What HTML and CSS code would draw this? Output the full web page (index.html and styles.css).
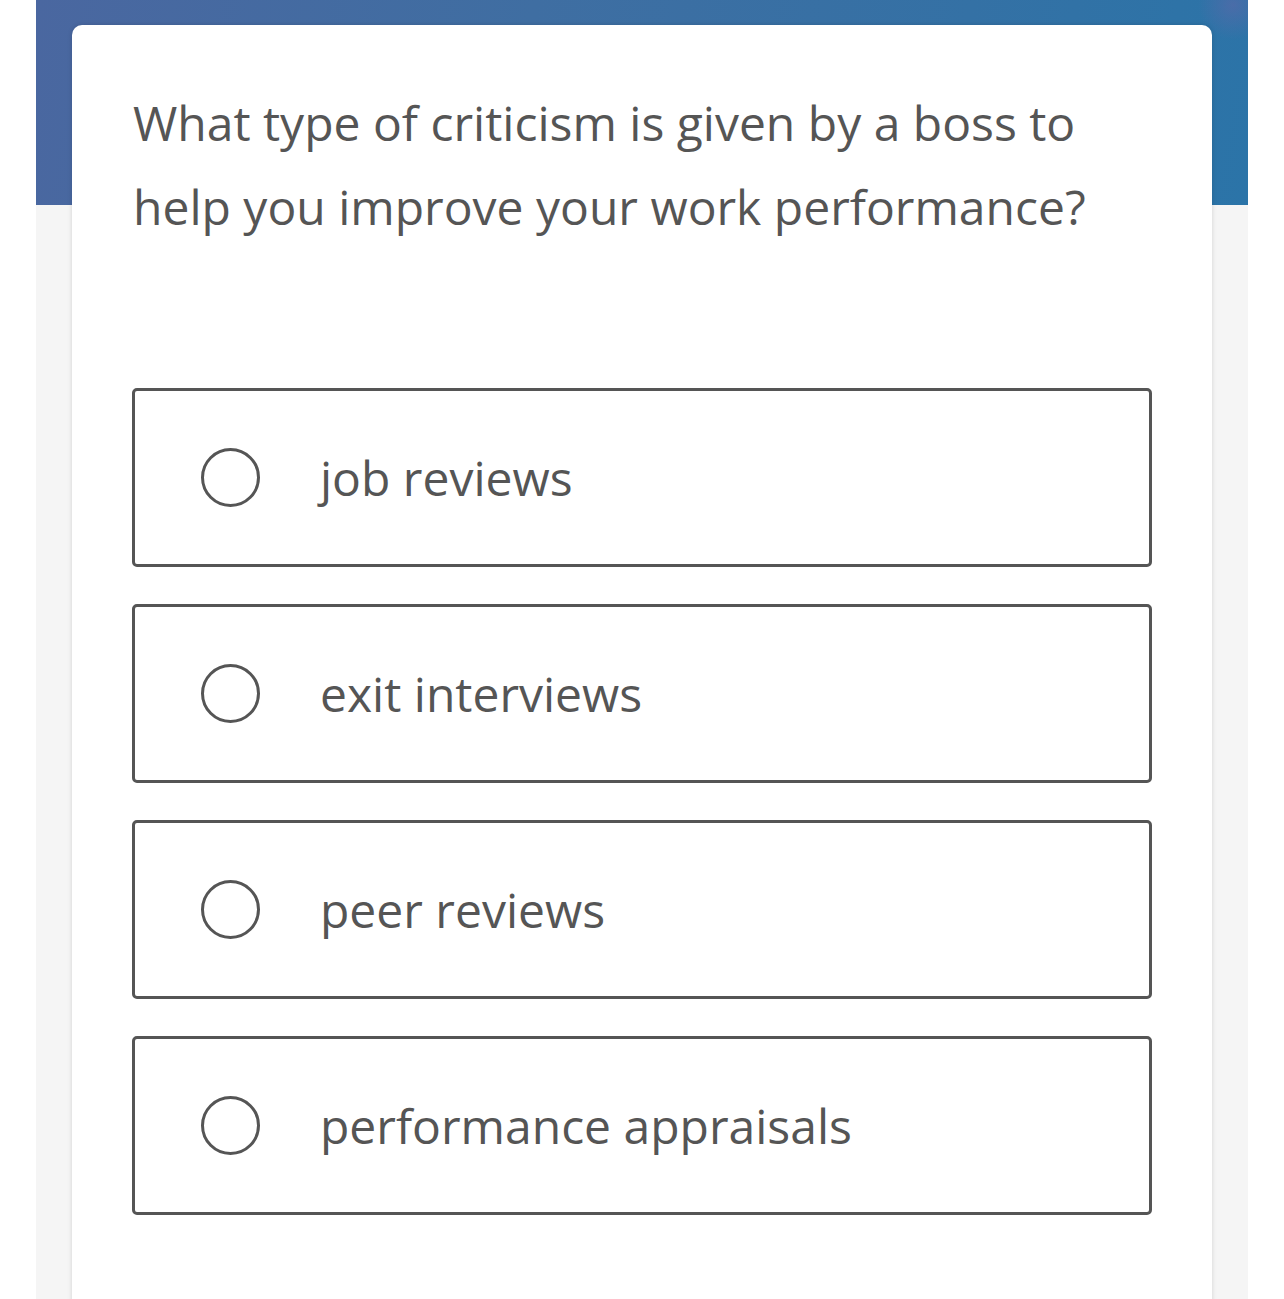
FILE: index.html
```html
<!DOCTYPE html>
<html lang="en">
<head>
<meta charset="utf-8">
<title>Quiz question</title>
<link rel="stylesheet" href="styles.css">
</head>
<body>
<div class="page">
  <div class="header"></div>
  <main class="card">
    <h1 class="question">What type of criticism is given by a boss to help you improve your work performance?</h1>
    <ul class="options">
      <li class="option"><span class="radio"></span><span class="label">job reviews</span></li>
      <li class="option"><span class="radio"></span><span class="label">exit interviews</span></li>
      <li class="option"><span class="radio"></span><span class="label">peer reviews</span></li>
      <li class="option"><span class="radio"></span><span class="label">performance appraisals</span></li>
    </ul>
  </main>
</div>
</body>
</html>
```
FILE: styles.css
```css
html, body {
  margin: 0;
  padding: 0;
  background: #ffffff;
}
body {
  font-family: "Open Sans", "Noto Sans", sans-serif;
  color: #555555;
  height: 1299px;
  overflow: hidden;
}
.page {
  margin: 0 36px;
  background: #f5f5f5;
  height: 1299px;
  overflow: hidden;
}
.header {
  height: 205px;
  background: linear-gradient(100deg, #4a67a0 0%, #3f6ea2 40%, #3471a5 75%, #2b74a8 100%);
  position: relative;
  overflow: hidden;
}
.header::after {
  content: "";
  position: absolute;
  right: -20px;
  top: -30px;
  width: 70px;
  height: 70px;
  background: radial-gradient(circle, rgba(110, 100, 170, 0.45), rgba(110, 100, 170, 0) 70%);
}
.card {
  position: relative;
  margin: -180px 36px 0;
  background: #ffffff;
  border-radius: 10px 10px 0 0;
  box-shadow: 0 0 5px rgba(0, 0, 0, 0.14);
  padding: 56px 60px 0;
  height: 1290px;
  box-sizing: border-box;
}
.question {
  margin: 0 1px;
  font-size: 48px;
  line-height: 84px;
  font-weight: 400;
  color: #555555;
}
.options {
  list-style: none;
  margin: 139px 0 0;
  padding: 0;
  display: flex;
  flex-direction: column;
  gap: 37px;
}
.option {
  height: 179px;
  box-sizing: border-box;
  border: 3px solid #555555;
  border-radius: 5px;
  display: flex;
  align-items: center;
  padding-left: 66px;
}
.radio {
  width: 59px;
  height: 59px;
  box-sizing: border-box;
  border: 3px solid #555555;
  border-radius: 50%;
  flex: none;
}
.label {
  margin-left: 60px;
  font-size: 48px;
  line-height: 60px;
  color: #555555;
}
```
